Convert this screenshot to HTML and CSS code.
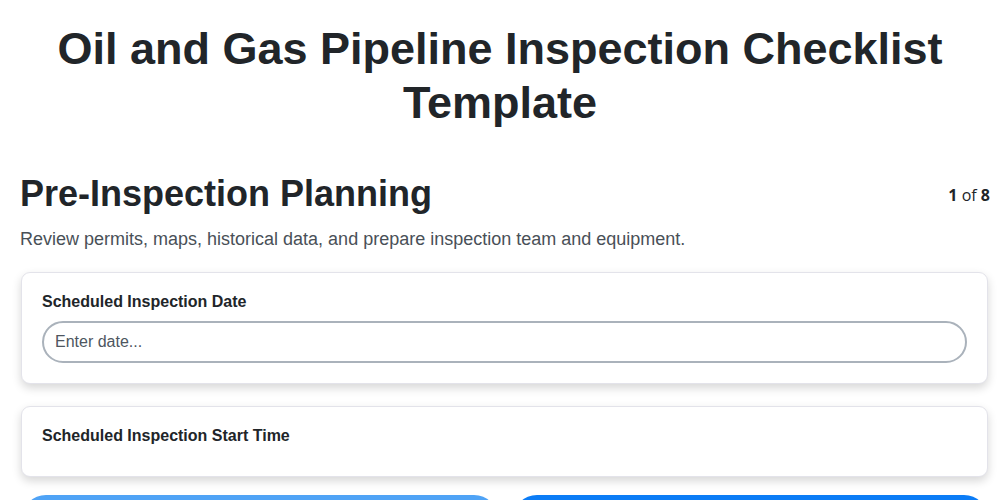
FILE: index.html
```
<!DOCTYPE html>
<html lang="en">
<head>
    <meta charset="UTF-8">
    <title>Oil and Gas Pipeline Inspection Checklist Template</title>
    <link rel="stylesheet" href="styles.css">
</head>
<body>
    <div class="page">
        <h1 class="title">Oil and Gas Pipeline Inspection Checklist Template</h1>
        <div class="step">
            <div class="step-head">
                <h2 class="step-title">Pre-Inspection Planning</h2>
                <div class="step-count"><b>1</b> of <b>8</b></div>
            </div>
            <p class="step-desc">Review permits, maps, historical data, and prepare inspection team and equipment.</p>
            <div class="card">
                <label class="field-label" for="date">Scheduled Inspection Date</label>
                <input class="field-input" id="date" type="text" placeholder="Enter date...">
            </div>
            <div class="card card-short">
                <label class="field-label">Scheduled Inspection Start Time</label>
            </div>
            <div class="btn-row">
                <button class="btn btn-prev">Previous</button>
                <button class="btn btn-next">Next</button>
            </div>
        </div>
    </div>
</body>
</html>
```

FILE: styles.css
```
*{
    margin: 0;
    padding: 0;
    box-sizing: border-box;
}
body{
    font-family: "Liberation Sans", Arial, sans-serif;
    color: #212529;
    background: #ffffff;
}
.page{
    padding: 22px 10px 0 10px;
}
.title{
    font-size: 45px;
    line-height: 54px;
    text-align: center;
    font-weight: bold;
    margin-bottom: 42px;
}
.step{
    padding-left: 10px;
}
.step-head{
    display: flex;
    justify-content: space-between;
    align-items: flex-start;
}
.step-title{
    font-size: 36px;
    line-height: 44px;
    font-weight: bold;
}
.step-count{
    font-family: "Open Sans", sans-serif;
    font-size: 16px;
    margin-top: 12px;
}
.step-desc{
    font-size: 18px;
    line-height: 21px;
    color: #495057;
    margin-top: 13px;
    margin-bottom: 22px;
}
.card{
    background: #ffffff;
    border: 1px solid #e3e3ea;
    border-radius: 9px;
    box-shadow: 0 4px 10px rgba(0, 0, 0, 0.16);
    padding: 20px;
    margin-bottom: 22px;
    margin-left: 1px;
    margin-right: 2px;
}
.card-short{
    height: 71px;
    margin-bottom: 18px;
}
.field-label{
    display: block;
    font-size: 16px;
    font-weight: bold;
    margin-bottom: 10px;
}
.field-input{
    display: block;
    width: 100%;
    height: 42px;
    border: 2px solid #aab2bb;
    border-radius: 21px;
    padding: 0 11px;
    font-family: "Liberation Sans", Arial, sans-serif;
    font-size: 16px;
    color: #212529;
    outline: none;
}
.field-input::placeholder{
    color: #4e5660;
}
.btn-row{
    display: flex;
    gap: 15px;
    padding-left: 2px;
    margin-right: 2px;
}
.btn{
    flex: 1;
    padding: 16px 0;
    border: none;
    border-radius: 24px;
    color: #ffffff;
    font-size: 16px;
    font-weight: bold;
}
.btn-prev{
    background: #4fa3f6;
}
.btn-next{
    background: #0b7cf6;
}
```
